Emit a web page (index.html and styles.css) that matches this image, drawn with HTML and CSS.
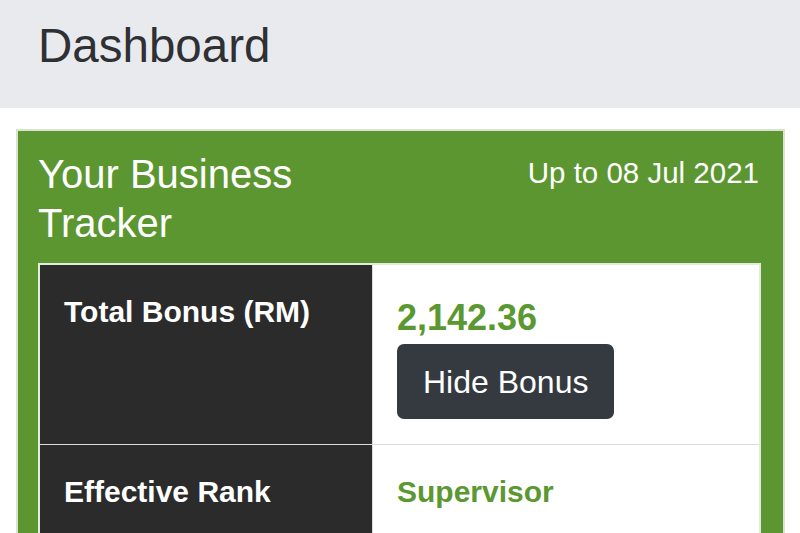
FILE: index.html
```html
<!DOCTYPE html>
<html>
<head>
<meta charset="utf-8">
<link rel="stylesheet" href="styles.css">
</head>
<body>
<header class="page-header">
  <h1 class="page-title">Dashboard</h1>
</header>
<section class="tracker-card">
  <div class="tracker-head">
    <h2 class="tracker-title">Your Business Tracker</h2>
    <div class="tracker-date">Up to 08 Jul 2021</div>
  </div>
  <table class="tracker-table">
    <tr>
      <th class="label-cell">Total Bonus (RM)</th>
      <td class="value-cell">
        <div class="value value-amount">2,142.36</div>
        <button class="btn-dark">Hide Bonus</button>
      </td>
    </tr>
    <tr>
      <th class="label-cell">Effective Rank</th>
      <td class="value-cell">
        <div class="value value-rank">Supervisor</div>
      </td>
    </tr>
  </table>
</section>
</body>
</html>
```
FILE: styles.css
```css
html, body {
  margin: 0;
  padding: 0;
  background: #ffffff;
  font-family: "Liberation Sans", Arial, sans-serif;
}
.page-header {
  background: #e9eaee;
  padding: 18px 38px 35px;
}
.page-title {
  margin: 0;
  font-size: 47.5px;
  line-height: 55px;
  font-weight: 400;
  color: #2f3033;
}
.tracker-card {
  margin: 21px 15px 0 16px;
  border: 2px solid #d8e4d0;
  background: #5c9630;
  padding: 19px 22px 20px 20px;
}
.tracker-head {
  display: flex;
  justify-content: space-between;
  align-items: flex-start;
  margin-bottom: 15px;
}
.tracker-title {
  margin: 0;
  max-width: 50%;
  font-size: 40px;
  line-height: 49px;
  font-weight: 400;
  color: #ffffff;
}
.tracker-date {
  font-size: 29.5px;
  line-height: 45px;
  padding-right: 2px;
  color: #ffffff;
}
.tracker-table {
  width: 100%;
  border-collapse: collapse;
  border: 2px solid #e3ebdd;
}
.tracker-table th,
.tracker-table td {
  border: 1px solid #dcdcdc;
  padding: 25px 24px;
  vertical-align: top;
  text-align: left;
}
.label-cell {
  width: 284px;
  background: #2b2b2b;
  color: #ffffff;
  font-size: 30px;
  line-height: 44px;
  font-weight: 700;
}
.value-cell {
  background: #ffffff;
}
.value {
  color: #5b9832;
  font-weight: 700;
}
.value-amount {
  margin-top: 6px;
  font-size: 36px;
  line-height: 44px;
}
.value-rank {
  font-size: 30px;
  line-height: 44px;
}
.btn-dark {
  margin-top: 4px;
  background: #343a40;
  color: #ffffff;
  border: none;
  border-radius: 7px;
  font-family: "Liberation Sans", Arial, sans-serif;
  font-size: 32px;
  line-height: 46px;
  padding: 14.5px 26px;
}
```
